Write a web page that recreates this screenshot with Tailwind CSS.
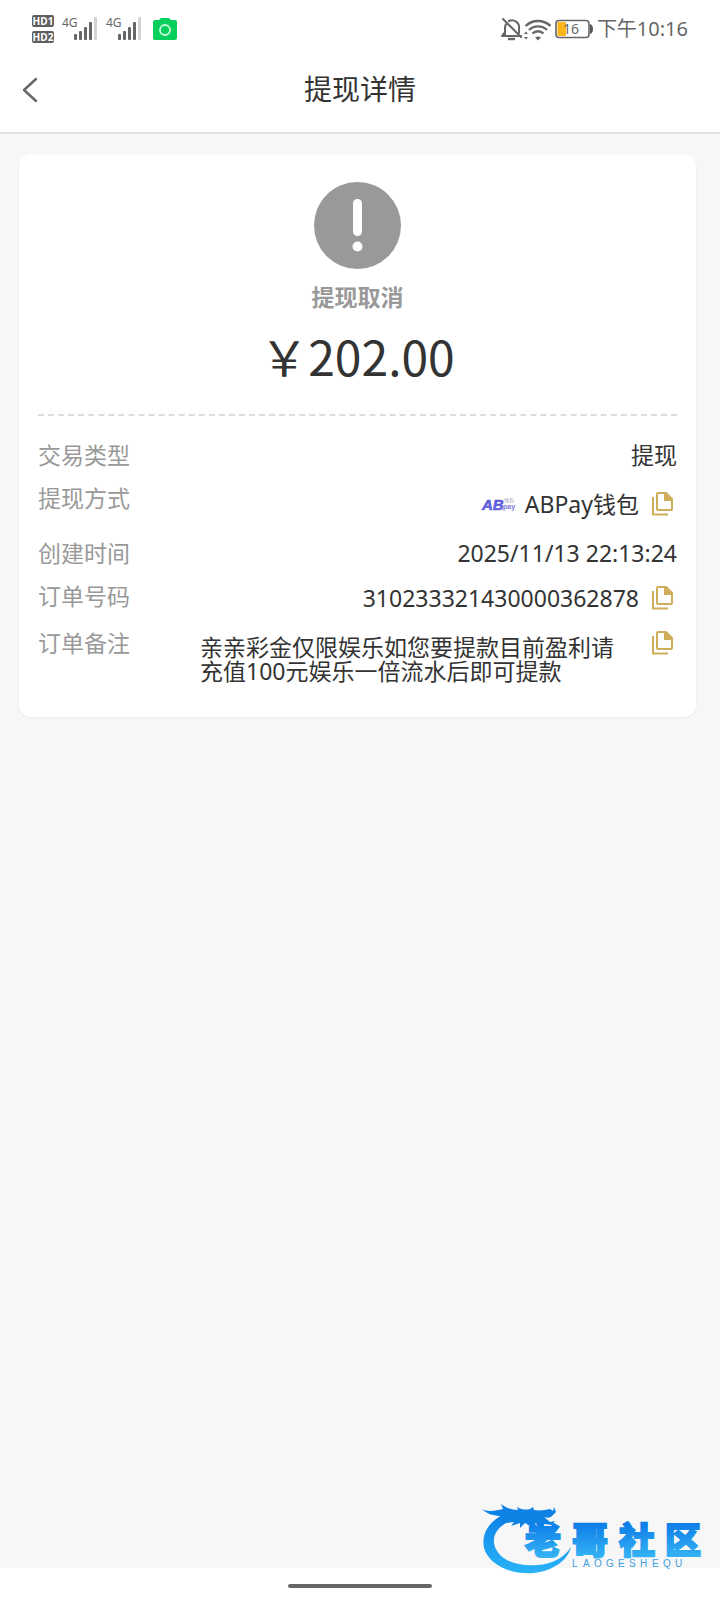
<!DOCTYPE html>
<html lang="zh-CN">
<head>
    <meta charset="UTF-8">
    <meta name="viewport" content="width=device-width, initial-scale=1.0">
    <title>提现详情</title>
    <script src="https://cdn.jsdelivr.net/npm/@tailwindcss/browser@4"></script>
</head>
<body class="font-['Noto_Sans','Noto_Sans_CJK_SC',sans-serif] bg-[#f7f7f7] text-[#333333]">
    <div class="relative min-h-screen flex flex-col">

        <!-- Status bar -->
        <div class="bg-white h-[58px] px-8 flex items-center justify-between text-[#666666]">
            <div class="flex items-center">
                <div class="flex flex-col gap-1 font-['Open_Sans',sans-serif] text-[10px] leading-3 font-bold text-white text-center">
                    <span class="w-[22px] h-3 rounded-xs bg-[#606060]">HD1</span>
                    <span class="w-[22px] h-3 rounded-xs bg-[#606060]">HD2</span>
                </div>
                <div class="flex ml-2">
                    <span class="text-xs leading-3 w-3">4G</span>
                    <svg class="w-8 h-6" viewBox="0 0 32 24" fill="#666666">
                        <rect x="0" y="17" width="3" height="6" rx="1"/>
                        <rect x="5" y="14" width="3" height="9" rx="1"/>
                        <rect x="10" y="10" width="3" height="13" rx="1"/>
                        <rect x="15" y="5" width="3" height="18" rx="1"/>
                        <rect x="20" y="0" width="3" height="23" rx="1" fill="#d4d4d4"/>
                    </svg>
                </div>
                <div class="flex">
                    <span class="text-xs leading-3 w-3">4G</span>
                    <svg class="w-8 h-6" viewBox="0 0 32 24" fill="#666666">
                        <rect x="0" y="17" width="3" height="6" rx="1"/>
                        <rect x="5" y="14" width="3" height="9" rx="1"/>
                        <rect x="10" y="10" width="3" height="13" rx="1"/>
                        <rect x="15" y="5" width="3" height="18" rx="1"/>
                        <rect x="20" y="0" width="3" height="23" rx="1" fill="#d4d4d4"/>
                    </svg>
                </div>
                <svg class="w-6 h-6 ml-[3px]" viewBox="0 0 24 24">
                    <path d="M2 3h4l2-2h8l2 2h4a2 2 0 0 1 2 2v16a2 2 0 0 1-2 2H2a2 2 0 0 1-2-2V5a2 2 0 0 1 2-2z" fill="#06cf5b"/>
                    <circle cx="12" cy="13" r="5" fill="none" stroke="#c9f7d9" stroke-width="1.8"/>
                </svg>
            </div>

            <div class="flex items-center">
                <svg class="w-[50px] h-6" viewBox="0 0 50 24" fill="none" stroke="#666666" stroke-width="2">
                    <path d="M1 19h19M4 19v-8a7 7 0 0 1 2-5M8 4a7 7 0 0 1 10 7v5M1 19l3-4M2 2l18 18" stroke-linecap="round"/>
                    <path d="M7 22h7" stroke-width="2.4"/>
                    <path d="M23 17l2-2.500 2 2.500zM23 20l2 2.500 2-2.500z" fill="#666666" stroke="none"/>
                    <path d="M24.500 9a18 18 0 0 1 25 0M28 13a13 13 0 0 1 18 0M31.500 16.500a8 8 0 0 1 11 0" stroke-width="2.400"/>
                    <path d="M34 20.500q3-2 6 0l-3 3z" fill="#666666" stroke="none"/>
                </svg>
                <div class="relative ml-1">
                    <svg class="w-[38px] h-5" viewBox="0 0 38 20">
                        <rect x="1" y="1.500" width="33" height="17" rx="3" fill="none" stroke="#666666" stroke-width="1.600"/>
                        <rect x="2.500" y="3" width="8.500" height="14" rx="1" fill="#fbb61a"/>
                        <path d="M35 5q3 1 3 5t-3 5z" fill="#555555"/>
                    </svg>
                    <span class="absolute left-2 top-1 text-sm leading-3">16</span>
                </div>
                <span class="ml-1 text-xl leading-6">下午10:16</span>
            </div>
        </div>

        <!-- Page header -->
        <header class="bg-white h-[76px] px-5 pb-3 grid grid-cols-[24px_1fr_24px] items-center border-b-2 border-[#e2e2e2]">
            <button type="button" aria-label="返回" class="h-8 flex items-center">
                <svg class="w-6 h-8" viewBox="0 0 24 32" fill="none" stroke="#666666" stroke-width="2.4" stroke-linecap="round" stroke-linejoin="round">
                    <path d="M16 6L4 17l12 11"/>
                </svg>
            </button>
            <h1 class="text-center text-[28px] leading-9">提现详情</h1>
        </header>

        <main class="flex-grow pt-5 pl-[19px] pr-6">
            <div class="bg-white rounded-xl shadow-sm shadow-black/5 px-[19px] pt-7 pb-[34px]">
                <div class="flex flex-col items-center border-b-2 border-dashed border-[#dddddd] pb-8">
                    <svg class="w-[87px] h-[87px]" viewBox="0 0 87 87">
                        <circle cx="43.500" cy="43.500" r="43.500" fill="#999999"/>
                        <rect x="39" y="17" width="9" height="37" rx="4.500" fill="#ffffff"/>
                        <circle cx="43.500" cy="64.500" r="5" fill="#ffffff"/>
                    </svg>
                    <p class="mt-4 text-[23px] leading-6 font-bold text-[#999999]">提现取消</p>
                    <p class="mt-5 font-['Noto_Sans_CJK_SC',sans-serif] text-5xl leading-[53px]">￥202.00</p>
                </div>

                <dl class="mt-[27px] flex flex-col gap-[19px] text-[23px] leading-6">
                    <div class="flex justify-between">
                        <dt class="text-[#999999]">交易类型</dt>
                        <dd>提现</dd>
                    </div>
                    <div class="flex justify-between">
                        <dt class="text-[#999999]">提现方式</dt>
                        <dd class="h-9 flex items-center">
                            <svg class="w-9 h-5 mr-2" viewBox="0 0 36 20">
                                <defs>
                                    <linearGradient id="ab" x1="0" y1="0" x2="0" y2="1">
                                        <stop offset="0" stop-color="#4a46c4"/>
                                        <stop offset="1" stop-color="#7e7cf0"/>
                                    </linearGradient>
                                </defs>
                                <text x="1" y="16" font-family="Liberation Sans, sans-serif" font-size="15" font-weight="bold" font-style="italic" fill="url(#ab)" stroke="#5a57d6" stroke-width="0.6">AB</text>
                                <text x="23" y="8" font-family="Noto Sans CJK SC, sans-serif" font-size="5" fill="#9a8fae">钱包</text>
                                <text x="22" y="15" font-family="Liberation Sans, sans-serif" font-size="7" font-weight="bold" fill="#7a74d8">pay</text>
                            </svg>
                            <span>ABPay钱包</span>
                            <button type="button" aria-label="复制提现方式" class="ml-3 mr-1">
                                <svg class="w-[22px] h-6" viewBox="0 0 22 24" fill="none" stroke="#cfae5b" stroke-width="2">
                                    <path d="M2 5v17.500h15"/>
                                    <path d="M7 1h8l6 6v10a1 1 0 0 1-1 1H7a1 1 0 0 1-1-1V2a1 1 0 0 1 1-1z"/>
                                    <path d="M14 1v7h7z" fill="#cfae5b"/>
                                </svg>
                            </button>
                        </dd>
                    </div>
                    <div class="flex justify-between">
                        <dt class="text-[#999999]">创建时间</dt>
                        <dd>2025/11/13 22:13:24</dd>
                    </div>
                    <div class="flex justify-between">
                        <dt class="text-[#999999]">订单号码</dt>
                        <dd class="h-7 flex items-center">
                            <span>310233321430000362878</span>
                            <button type="button" aria-label="复制订单号码" class="ml-3 mr-1">
                                <svg class="w-[22px] h-6" viewBox="0 0 22 24" fill="none" stroke="#cfae5b" stroke-width="2">
                                    <path d="M2 5v17.500h15"/>
                                    <path d="M7 1h8l6 6v10a1 1 0 0 1-1 1H7a1 1 0 0 1-1-1V2a1 1 0 0 1 1-1z"/>
                                    <path d="M14 1v7h7z" fill="#cfae5b"/>
                                </svg>
                            </button>
                        </dd>
                    </div>
                    <div class="flex justify-between">
                        <dt class="text-[#999999] shrink-0">订单备注</dt>
                        <dd class="flex grow items-start justify-between pl-[70px]">
                            <p class="pt-1 max-w-[420px]">亲亲彩金仅限娱乐如您要提款目前盈利请充值100元娱乐一倍流水后即可提款</p>
                            <button type="button" aria-label="复制订单备注" class="ml-3 mr-1">
                                <svg class="w-[22px] h-6" viewBox="0 0 22 24" fill="none" stroke="#cfae5b" stroke-width="2">
                                    <path d="M2 5v17.500h15"/>
                                    <path d="M7 1h8l6 6v10a1 1 0 0 1-1 1H7a1 1 0 0 1-1-1V2a1 1 0 0 1 1-1z"/>
                                    <path d="M14 1v7h7z" fill="#cfae5b"/>
                                </svg>
                            </button>
                        </dd>
                    </div>
                </dl>
            </div>
        </main>

        <!-- Gesture bar -->
        <footer class="bg-white h-8 pt-1 flex items-center justify-center">
            <div class="w-1/5 h-1 rounded-full bg-[#666666]"></div>
        </footer>

        <!-- Community watermark -->
        <svg class="absolute right-4 bottom-6 w-[224px] h-[78px]" viewBox="0 0 224 78" role="img" aria-label="老哥社区">
            <defs>
                <linearGradient id="ring" x1="0" y1="0" x2="0" y2="1">
                    <stop offset="0" stop-color="#0d80e6"/>
                    <stop offset="1" stop-color="#2ab4f8"/>
                </linearGradient>
                <linearGradient id="word" gradientUnits="userSpaceOnUse" x1="0" y1="27" x2="0" y2="59">
                    <stop offset="0" stop-color="#0f7fe8"/>
                    <stop offset="1" stop-color="#35b3f5"/>
                </linearGradient>
            </defs>
            <path d="M28 15C10 21 1 35 4 50c5 17 27 27 50 25 19-2 34-13 37-26-7 11-19 17-33 18-21 2-38-5-43-18-4-11 3-22 18-27z" fill="url(#ring)"/>
            <path d="M1 11c7 3 14 2 22 0l-2-5c5 4 11 6 17 6l-1-3c5 3 9 3 13 2l3-2 1 3c6 1 11 0 16-1l3 2 1-4 2 5-4 4c-2 2-5 2-8 1l6 5 5-1-3 4-8-1c-3 1-6 0-9-1l2 5c-6-1-9-3-12-5l-5 5v-5l-9 3 3-4-8 1-6 3 2-5-7-1 6-4c-7 0-14-2-19-7z" fill="#0f82e6"/>
            <g font-family="Noto Sans CJK SC, sans-serif" font-size="36" font-weight="900" fill="url(#word)" stroke="url(#word)" stroke-width="2">
                <text x="45" y="56">老</text>
                <text x="92" y="56">哥</text>
                <text x="139" y="56">社</text>
                <text x="185" y="56">区</text>
            </g>
            <text x="92 103 114 126 138 149 160 172 183 195" y="69" font-family="Liberation Sans, sans-serif" font-size="10" fill="#3f9fe0">LAOGESHEQU</text>
        </svg>
    </div>
</body>
</html>
